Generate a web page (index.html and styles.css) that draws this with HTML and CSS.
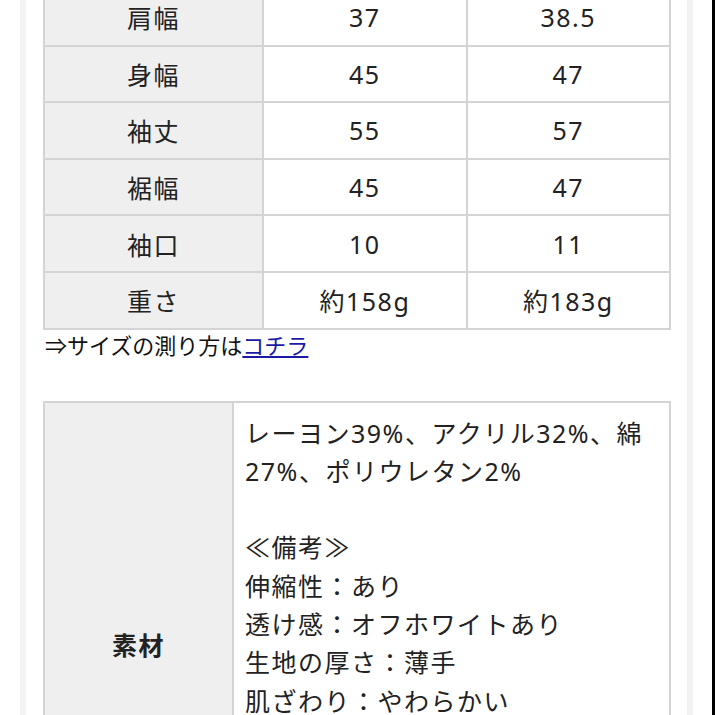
FILE: index.html
```html
<!DOCTYPE html>
<html lang="ja">
<head>
<meta charset="utf-8">
<link rel="stylesheet" href="styles.css">
</head>
<body>
<div class="frame">
  <div class="page">
    <div class="content">
      <table class="size">
        <tr><th>肩幅</th><td>37</td><td>38.5</td></tr>
        <tr><th>身幅</th><td>45</td><td>47</td></tr>
        <tr><th>袖丈</th><td>55</td><td>57</td></tr>
        <tr><th>裾幅</th><td>45</td><td>47</td></tr>
        <tr><th>袖口</th><td>10</td><td>11</td></tr>
        <tr><th>重さ</th><td>約158g</td><td>約183g</td></tr>
      </table>
      <p class="note">⇒サイズの測り方は<a href="#">コチラ</a></p>
      <table class="spec">
        <tr>
          <th>素材</th>
          <td>
            <div>レーヨン39%、アクリル32%、綿27%、ポリウレタン2%</div>
            <div class="blank">&nbsp;</div>
            <div>≪備考≫</div>
            <div>伸縮性：あり</div>
            <div>透け感：オフホワイトあり</div>
            <div>生地の厚さ：薄手</div>
            <div>肌ざわり：やわらかい</div>
            <div>裏地：なし</div>
            <div>光沢感：なし</div>
            <div>ポケット：なし</div>
          </td>
        </tr>
      </table>
    </div>
  </div>
</div>
</body>
</html>
```

FILE: styles.css
```css
html, body {
  margin: 0;
  padding: 0;
  background: #ffffff;
}
body {
  font-family: "Noto Sans", "Noto Sans CJK JP", sans-serif;
  color: #222;
}
.frame {
  border-right: 3px solid #000;
  padding-left: 20px;
  padding-right: 19px;
  min-height: 715px;
}
.page {
  border-left: 6px solid #f3f3f3;
  border-right: 6px solid #f3f3f3;
  min-height: 715px;
}
.content {
  padding: 0 16px 0 17px;
  margin-top: -12px;
}
table {
  width: 100%;
  border-collapse: collapse;
  font-size: 25px;
  letter-spacing: 1.5px;
}
.size th, .size td {
  border: 2px solid #d4d4d4;
  height: 54.6px;
  padding: 0;
  text-align: center;
  font-weight: normal;
  color: #222;
}
.size th {
  background: #efefef;
  width: 218px;
}
.size td {
  width: 202px;
}
.note {
  margin: 0;
  font-size: 22px;
  line-height: 30px;
  padding-left: 2px;
  color: #111;
}
.note a {
  color: #1a1aa6;
  text-decoration: underline;
}
.spec {
  margin-top: 41px;
}
.spec th, .spec td {
  border: 2px solid #d4d4d4;
}
.spec th {
  background: #efefef;
  width: 185px;
  height: 480px;
  vertical-align: middle;
  font-weight: bold;
  color: #222;
}
.spec td {
  vertical-align: top;
  padding: 11px 8px 12px 11px;
  line-height: 38.3px;
  text-align: left;
  color: #222;
}
```
